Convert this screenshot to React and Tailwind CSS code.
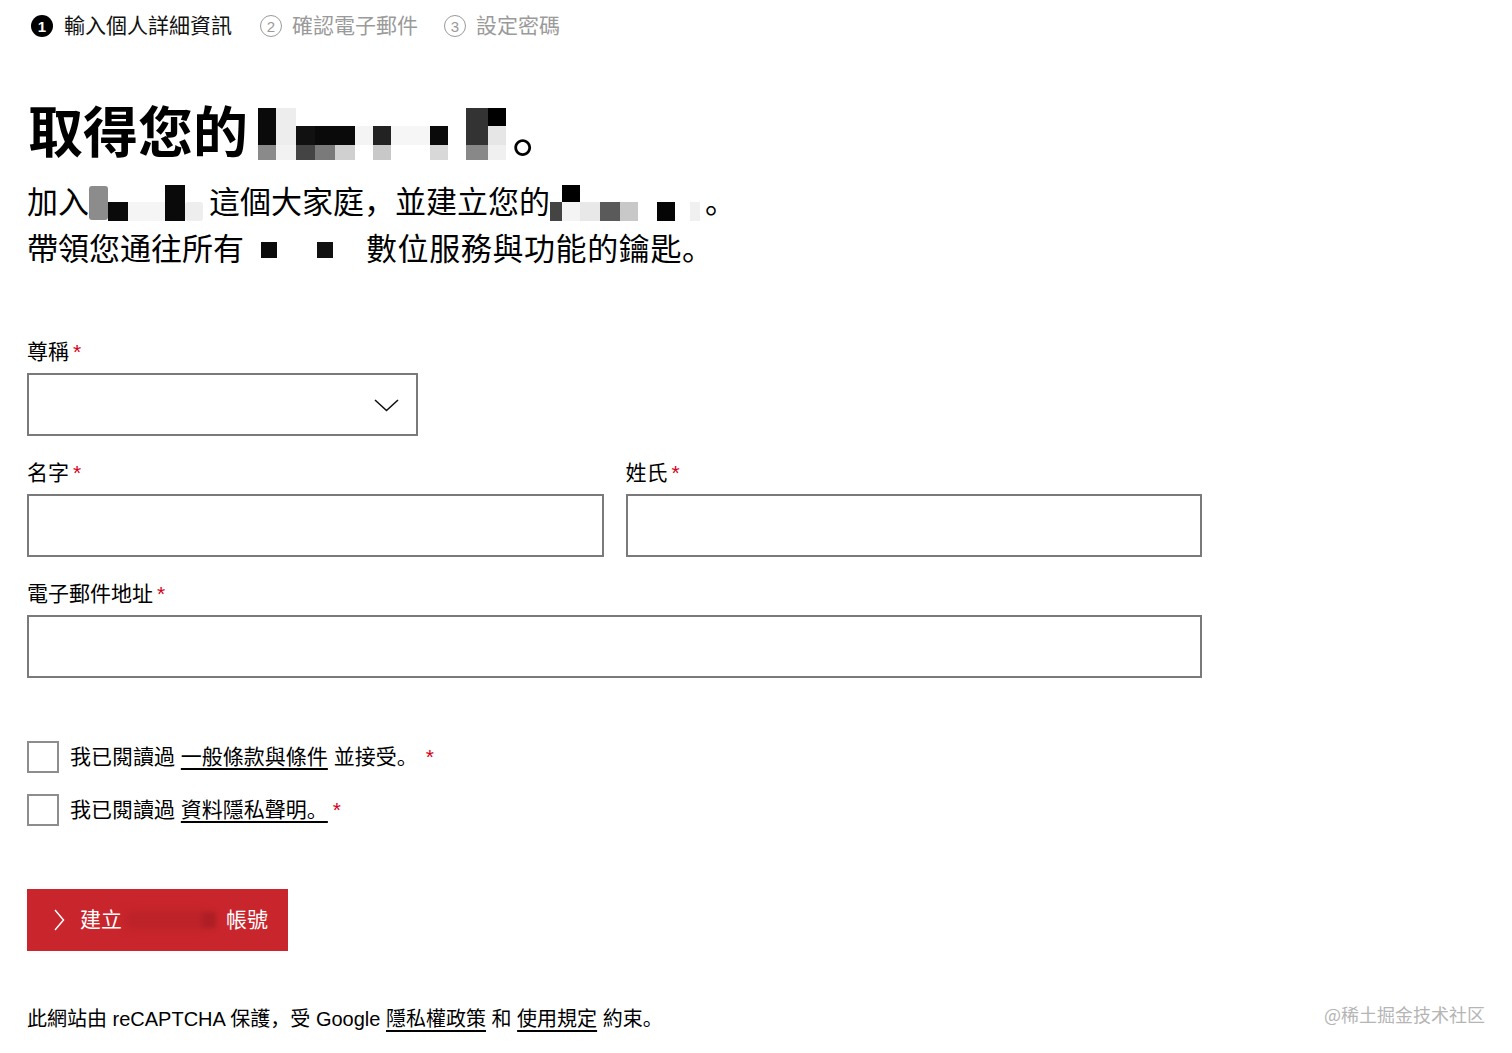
import React from "react";

const FONT = '"Liberation Sans", "Noto Sans CJK SC", sans-serif';

function Req({ className = "" }) {
  return <span className={"text-[#d5001c] ml-[4px] " + className}>*</span>;
}

function HeadingMosaic() {
  return (
    <svg width="250" height="52" viewBox="0 0 250 52" className="block shrink-0">
      <rect x="0" y="0" width="18" height="37" fill="#0a0a0a" />
      <rect x="0" y="37" width="18" height="15" fill="#8a8a8a" />
      <rect x="18" y="0" width="20" height="37" fill="#ededed" />
      <rect x="18" y="37" width="20" height="15" fill="#f2f2f2" />
      <rect x="38" y="18" width="19" height="19" fill="#111111" />
      <rect x="57" y="18" width="40" height="19" fill="#0a0a0a" />
      <rect x="38" y="37" width="19" height="15" fill="#444444" />
      <rect x="57" y="37" width="20" height="15" fill="#7a7a7a" />
      <rect x="77" y="37" width="20" height="15" fill="#d0d0d0" />
      <rect x="97" y="18" width="18" height="19" fill="#f4f4f4" />
      <rect x="115" y="18" width="18" height="19" fill="#222222" />
      <rect x="115" y="37" width="18" height="15" fill="#c8c8c8" />
      <rect x="133" y="18" width="39" height="19" fill="#f6f6f6" />
      <rect x="172" y="18" width="18" height="19" fill="#0a0a0a" />
      <rect x="172" y="37" width="18" height="15" fill="#d8d8d8" />
      <rect x="208" y="0" width="22" height="37" fill="#333333" />
      <rect x="230" y="0" width="18" height="18" fill="#000000" />
      <rect x="230" y="18" width="18" height="19" fill="#e6e6e6" />
      <rect x="208" y="37" width="22" height="15" fill="#888888" />
      <rect x="230" y="37" width="18" height="15" fill="#f0f0f0" />
    </svg>
  );
}

function Mosaic1() {
  return (
    <svg width="115" height="36" viewBox="0 0 115 36" className="block shrink-0">
      <rect x="0" y="1" width="19" height="34" rx="3" fill="#8c8c8c" />
      <rect x="19" y="17" width="20" height="19" fill="#0a0a0a" />
      <rect x="39" y="17" width="37" height="19" fill="#f5f5f5" />
      <rect x="76" y="0" width="20" height="36" fill="#0a0a0a" />
      <rect x="96" y="17" width="18" height="19" rx="3" fill="#eeeeee" />
    </svg>
  );
}

function Mosaic2() {
  return (
    <svg width="150" height="36" viewBox="0 0 150 36" className="block shrink-0">
      <rect x="12" y="0" width="18" height="17" fill="#000000" />
      <rect x="0" y="17" width="12" height="19" fill="#444444" />
      <rect x="12" y="17" width="18" height="19" fill="#f4f4f4" />
      <rect x="30" y="17" width="20" height="19" fill="#e8e8e8" />
      <rect x="50" y="17" width="20" height="19" fill="#5a5a5a" />
      <rect x="70" y="17" width="18" height="19" fill="#c8c8c8" />
      <rect x="107" y="17" width="18" height="19" fill="#050505" />
      <rect x="140" y="17" width="10" height="19" fill="#f0f0f0" />
    </svg>
  );
}

function Mosaic3() {
  return (
    <svg width="122" height="36" viewBox="0 0 122 36" className="block shrink-0">
      <rect x="17" y="10" width="16" height="16" fill="#0a0a0a" />
      <rect x="73" y="10" width="16" height="16" fill="#111111" />
    </svg>
  );
}

function Field({ label, className = "", children }) {
  return (
    <div className={"flex flex-col " + className}>
      <div className="text-[21px] leading-[28px] text-black flex items-start">
        <span>{label}</span>
        <Req />
      </div>
      <div className="mt-[7px]">{children}</div>
    </div>
  );
}

function Input() {
  return <div className="h-[63px] w-full border-2 border-[#7a7a7a] bg-white" />;
}

function Checkbox({ children }) {
  return (
    <div className="flex items-center h-[32px] gap-[11px]">
      <div className="w-[32px] h-[32px] border-2 border-[#8d8d8d] bg-white shrink-0" />
      <div className="text-[21px] leading-[28px] text-black">{children}</div>
    </div>
  );
}

export default function App() {
  return (
    <div className="relative min-h-[1053px] w-full bg-white px-[27px] text-black" style={{ fontFamily: FONT }}>
      {/* Stepper */}
      <div className="pt-[12px] flex items-center text-[21px] leading-[28px]">
        <div className="flex items-center">
          <div className="ml-[4px] w-[22px] h-[22px] rounded-full bg-black text-white flex items-center justify-center text-[15px] font-bold leading-none">
            1
          </div>
          <span className="ml-[11px] text-[#111]">輸入個人詳細資訊</span>
        </div>
        <div className="flex items-center ml-[28px]">
          <div className="w-[22px] h-[22px] rounded-full border-[1.5px] border-[#9a9a9a] text-[#9a9a9a] flex items-center justify-center text-[15px] leading-none">
            2
          </div>
          <span className="ml-[10px] text-[#9a9a9a]">確認電子郵件</span>
        </div>
        <div className="flex items-center ml-[26px]">
          <div className="w-[22px] h-[22px] rounded-full border-[1.5px] border-[#9a9a9a] text-[#9a9a9a] flex items-center justify-center text-[15px] leading-none">
            3
          </div>
          <span className="ml-[10px] text-[#9a9a9a]">設定密碼</span>
        </div>
      </div>

      {/* Heading */}
      <div className="mt-[61px] flex items-center text-[55px] leading-[65px] font-bold">
        <span className="ml-[1px]">取得您的</span>
        <span className="ml-[10px] mt-[1px]">
          <HeadingMosaic />
        </span>
        <span className="ml-[4px] font-normal">。</span>
      </div>

      <div className="mt-[13px] text-[31px] leading-[47px]">
        <div className="flex items-center">
          <span>加入</span>
          <Mosaic1 />
          <span className="ml-[5px]">這個大家庭，並建立您的</span>
          <Mosaic2 />
          <span className="ml-[5px]">。</span>
        </div>
        <div className="flex items-center">
          <span>帶領您通往所有</span>
          <Mosaic3 />
          <span className="tracking-[0.6px]">數位服務與功能的鑰匙。</span>
        </div>
      </div>

      {/* Form */}
      <div className="mt-[65px] w-[1175px] flex flex-col">
        <Field label="尊稱" className="w-[391px]">
          <div className="relative h-[63px] w-full border-2 border-[#7a7a7a] bg-white flex items-center justify-end pr-[17px]">
            <svg width="25" height="13" viewBox="0 0 25 13" fill="none" className="mt-[2px]">
              <polyline points="1,1 12.5,11.5 24,1" stroke="#111" strokeWidth="1.6" fill="none" />
            </svg>
          </div>
        </Field>

        <div className="mt-[23px] flex gap-[22px]">
          <Field label="名字" className="flex-1">
            <Input />
          </Field>
          <Field label="姓氏" className="flex-1">
            <Input />
          </Field>
        </div>

        <Field label="電子郵件地址" className="mt-[23px]">
          <Input />
        </Field>
      </div>

      {/* Checkboxes */}
      <div className="mt-[63px] flex flex-col gap-[21px]">
        <Checkbox>
          我已閱讀過{" "}
          <span className="underline decoration-[1.5px] underline-offset-[4px]">一般條款與條件</span>{" "}
          並接受。
          <span className="text-[#d5001c] ml-[8px]">*</span>
        </Checkbox>
        <Checkbox>
          我已閱讀過{" "}
          <span className="underline decoration-[1.5px] underline-offset-[4px]">資料隱私聲明。</span>
          <span className="text-[#d5001c] ml-[5px]">*</span>
        </Checkbox>
      </div>

      {/* Button */}
      <div className="mt-[63px] w-[261px] h-[62px] bg-[#c9252c] flex items-center text-white text-[21px] leading-[28px]">
        <svg width="11" height="22" viewBox="0 0 11 22" fill="none" className="ml-[27px]">
          <polyline points="1,1 9.5,11 1,21" stroke="#fff" strokeWidth="1.5" fill="none" />
        </svg>
        <span className="ml-[15px]">建立</span>
        <span className="relative w-[104px] h-[28px] flex items-center">
          <span className="block w-[80px] h-[18px] ml-[4px] bg-[#b62228] blur-[5px] opacity-70" />
          <span className="block w-[14px] h-[16px] -ml-[4px] bg-[#a81e24] blur-[2px] opacity-80" />
        </span>
        <span>帳號</span>
      </div>

      {/* Footer */}
      <div className="mt-[54px] flex items-center justify-between text-[20px] leading-[28px]">
        <div>
          此網站由 reCAPTCHA 保護，受 Google{" "}
          <span className="underline decoration-[1.5px] underline-offset-[4px]">隱私權政策</span> 和{" "}
          <span className="underline decoration-[1.5px] underline-offset-[4px]">使用規定</span> 約束。
        </div>
        <div className="text-[18px] text-[#b5b5b5] -mt-[10px]" style={{ fontFamily: '"Noto Sans CJK SC", sans-serif' }}>
          @稀土掘金技术社区
        </div>
      </div>
    </div>
  );
}
